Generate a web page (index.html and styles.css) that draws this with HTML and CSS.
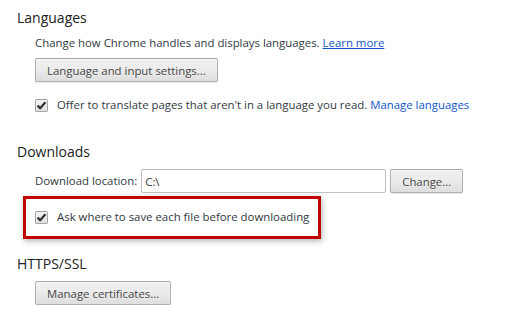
FILE: index.html
```html
<!DOCTYPE html>
<html lang="en">
<head>
  <meta charset="UTF-8" />
  <title>Settings</title>
  <link rel="stylesheet" href="styles.css">
</head>
<body>
  <section class="section">
    <h3 class="section-title">Languages</h3>
    <div class="section-body">
      <p class="desc">Change how Chrome handles and displays languages. <a class="link underline" href="#">Learn more</a></p>
      <div class="row"><button class="btn">Language and input settings...</button></div>
      <label class="check-row spaced">
        <span class="checkbox"><svg width="11" height="11" viewBox="0 0 11 11"><path d="M1.6 5.6 L4.2 8.2 L9.4 2.2" fill="none" stroke="#2e2e2e" stroke-width="2.2"/></svg></span>
        <span>Offer to translate pages that aren't in a language you read. <a class="link" href="#">Manage languages</a></span>
      </label>
    </div>
  </section>

  <section class="section downloads">
    <h3 class="section-title">Downloads</h3>
    <div class="section-body">
      <div class="location-row">
        <span>Download location:</span>
        <input class="path" type="text" value="C:\" readonly>
        <button class="btn">Change...</button>
      </div>
      <div class="highlight">
        <label class="check-row">
          <span class="checkbox"><svg width="11" height="11" viewBox="0 0 11 11"><path d="M1.6 5.6 L4.2 8.2 L9.4 2.2" fill="none" stroke="#2e2e2e" stroke-width="2.2"/></svg></span>
          <span>Ask where to save each file before downloading</span>
        </label>
      </div>
    </div>
  </section>

  <section class="section https">
    <h3 class="section-title">HTTPS/SSL</h3>
    <div class="section-body">
      <div class="row"><button class="btn">Manage certificates...</button></div>
    </div>
  </section>
</body>
</html>
```

FILE: styles.css
```css
body {
  margin: 0;
  padding: 8px 0 0 17px;
  background: #fff;
  color: #303942;
  font-family: 'Open Sans', sans-serif;
  font-size: 11.4px;
  line-height: 16px;
}
.section-title {
  margin: 0;
  font-size: 14px;
  line-height: 20px;
  font-weight: normal;
  color: #222;
}
.section-body {
  padding-left: 18px;
}
.desc {
  margin: 7px 0 0;
}
.link {
  color: #15c;
  text-decoration: none;
}
.link.underline {
  text-decoration: underline;
}
.row {
  margin-top: 7px;
}
.btn {
  height: 24px;
  padding: 0 11px;
  font-family: inherit;
  font-size: 11.4px;
  color: #444;
  background-image: linear-gradient(#ededed, #ededed 38%, #dedede);
  border: 1px solid rgba(0,0,0,0.25);
  border-radius: 2px;
  box-shadow: 0 1px 0 rgba(0,0,0,0.08), inset 0 1px 2px rgba(255,255,255,0.75);
  text-shadow: 0 1px 0 #f0f0f0;
}
.check-row {
  display: flex;
  align-items: center;
  gap: 9px;
  line-height: 18px;
}
.check-row.spaced {
  margin-top: 14px;
}
.checkbox {
  width: 11px;
  height: 11px;
  flex: none;
  display: flex;
  border: 1px solid rgba(0,0,0,0.3);
  border-radius: 2px;
  background-image: linear-gradient(#ededed, #ededed 38%, #dedede);
  box-shadow: inset 0 1px 2px rgba(255,255,255,0.75);
}
.downloads {
  margin-top: 28px;
}
.location-row {
  margin-top: 7px;
  display: flex;
  align-items: center;
  gap: 4px;
}
.path {
  width: 245px;
  box-sizing: border-box;
  height: 24px;
  padding: 0 3px;
  font-family: inherit;
  font-size: 11.4px;
  color: #333;
  border: 1px solid #bfbfbf;
  border-radius: 2px;
}
.highlight {
  display: flex;
  width: fit-content;
  margin: 3px 0 0 -12px;
  padding: 9px 9px 10px;
  border: 3px solid #c00000;
  box-shadow: 1px 2px 6px rgba(0,0,0,0.3);
}
.https {
  margin-top: 15px;
}
```
